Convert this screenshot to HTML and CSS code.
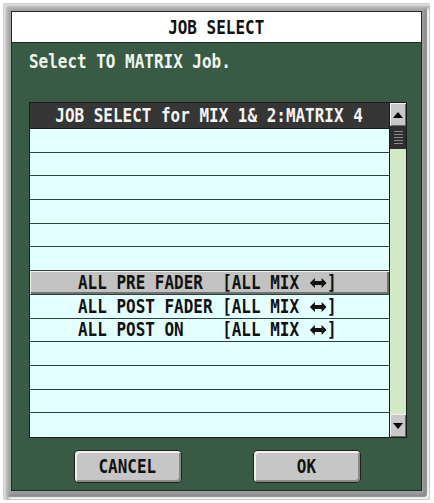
FILE: index.html
```html
<!DOCTYPE html>
<html>
<head>
<meta charset="utf-8">
<link rel="stylesheet" href="styles.css">
</head>
<body>
<div class="frame">
  <div class="dialog">
    <div class="titlebar"><span class="t">JOB SELECT</span></div>
    <div class="body">
      <div class="prompt"><span class="t">Select TO MATRIX Job.</span></div>
      <div class="listbox">
        <div class="list">
          <div class="header"><span class="t">JOB SELECT for MIX 1&amp; 2:MATRIX 4</span></div>
          <div class="rows">
            <div class="row"></div>
            <div class="row"></div>
            <div class="row"></div>
            <div class="row"></div>
            <div class="row"></div>
            <div class="row"></div>
            <div class="row selected"><span class="t">ALL PRE FADER  [ALL MIX <svg class="arr" viewBox="0 0 20 10"><path d="M0 5 L6 0 L6 3 L14 3 L14 0 L20 5 L14 10 L14 7 L6 7 L6 10 Z" fill="#111"/></svg>]</span></div>
            <div class="row"><span class="t">ALL POST FADER [ALL MIX <svg class="arr" viewBox="0 0 20 10"><path d="M0 5 L6 0 L6 3 L14 3 L14 0 L20 5 L14 10 L14 7 L6 7 L6 10 Z" fill="#111"/></svg>]</span></div>
            <div class="row"><span class="t">ALL POST ON    [ALL MIX <svg class="arr" viewBox="0 0 20 10"><path d="M0 5 L6 0 L6 3 L14 3 L14 0 L20 5 L14 10 L14 7 L6 7 L6 10 Z" fill="#111"/></svg>]</span></div>
            <div class="row"></div>
            <div class="row"></div>
            <div class="row"></div>
            <div class="row"></div>
          </div>
        </div>
        <div class="scrollbar">
          <div class="sbtn"><svg width="10" height="6" viewBox="0 0 10 6"><path d="M5 0 L10 6 L0 6 Z" fill="#000"/></svg></div>
          <div class="thumb"></div>
          <div class="track"></div>
          <div class="sbtn"><svg width="10" height="6" viewBox="0 0 10 6"><path d="M0 0 L10 0 L5 6 Z" fill="#000"/></svg></div>
        </div>
      </div>
      <div class="buttons">
        <div class="button"><span class="t">CANCEL</span></div>
        <div class="button"><span class="t">OK</span></div>
      </div>
    </div>
  </div>
</div>
</body>
</html>
```
FILE: styles.css
```css
html, body {
  margin: 0;
  padding: 0;
  background: #ffffff;
}
body {
  width: 434px;
  height: 503px;
  overflow: hidden;
  font-family: "DejaVu Sans Mono", "Liberation Mono", monospace;
  font-weight: bold;
}
.t {
  display: inline-block;
  white-space: pre;
  font-size: 19px;
  line-height: 19px;
  transform: scaleX(0.84);
}
.arr {
  width: 20px;
  height: 10px;
  margin: 0 1px 0 1px;
  vertical-align: 1px;
}
.frame {
  margin: 3px 4px 0 3px;
  width: 409px;
  height: 478px;
  padding: 9px 9px 10px 9px;
  background: #a0a0a0;
  border-radius: 3px;
  box-shadow:
    inset 1px 1px 0 #d0d0d0,
    inset 3px 3px 2px #dedede,
    inset 6px 6px 3px #b4b4b4,
    inset -1px -1px 0 #c8c8c8,
    inset -3px -3px 1px #f4f4f4,
    inset -6px -6px 3px #8c8c8c;
}
.dialog {
  width: 409px;
  height: 478px;
  display: flex;
  flex-direction: column;
  background: #395b46;
  box-shadow: 0 0 0 1px #1e2a22;
}
.titlebar {
  height: 29px;
  background: #ffffff;
  border-bottom: 1px solid #1e2a22;
  display: flex;
  align-items: center;
  justify-content: center;
  color: #111;
  padding-top: 1px;
}
.body {
  flex: 1;
  display: flex;
  flex-direction: column;
  padding: 0 14px 0 17px;
}
.prompt {
  color: #f2f6ea;
  height: 59px;
  padding-top: 9px;
  box-sizing: border-box;
}
.prompt .t {
  transform-origin: left center;
}
.listbox {
  display: flex;
  border: 1px solid #1a1a1a;
  height: 334px;
}
.list {
  width: 359px;
  display: flex;
  flex-direction: column;
}
.header {
  height: 25px;
  background: #363636;
  color: #f4f4f4;
  display: flex;
  align-items: center;
  justify-content: center;
  border-bottom: 1px solid #1a1a1a;
}
.rows {
  height: 308px;
  display: grid;
  grid-template-rows: repeat(13, 1fr);
}
.row {
  background: #e4ffff;
  border-bottom: 1px solid #2c4236;
  display: flex;
  align-items: center;
  padding-left: 48px;
  color: #111;
}
.row:last-child {
  border-bottom: none;
}
.row .t {
  transform-origin: left center;
}
.row.selected {
  background: #c2c2c2;
  box-shadow: inset 1px 1px 0 #f4f4f4, inset -2px -2px 0 #707070;
}
.scrollbar {
  width: 17px;
  border-left: 1px solid #1a1a1a;
  display: flex;
  flex-direction: column;
  background: #d2eac8;
}
.sbtn {
  height: 23px;
  background: #c8c8c8;
  box-shadow: inset 1px 1px 0 #f2f2f2, inset -1px -1px 0 #6a6a6a;
  display: flex;
  align-items: center;
  justify-content: center;
}
.thumb {
  height: 23px;
  background: #2e2e2e repeating-linear-gradient(to bottom, transparent 0 2px, #8a8a8a 2px 3px);
  background-size: 9px 17px;
  background-position: center 3px;
  background-repeat: no-repeat;
}
.track {
  flex: 1;
}
.buttons {
  display: flex;
  justify-content: center;
  gap: 71px;
  margin-top: 12px;
  padding-right: 2px;
}
.button {
  width: 106px;
  height: 31px;
  background: #c6c6c6;
  border: 1.5px solid #202020;
  border-radius: 4px;
  box-shadow: inset 2px 2px 0 #f0f0f0, inset -2px -2px 0 #8a8a8a;
  display: flex;
  align-items: center;
  justify-content: center;
  color: #111;
}
```
